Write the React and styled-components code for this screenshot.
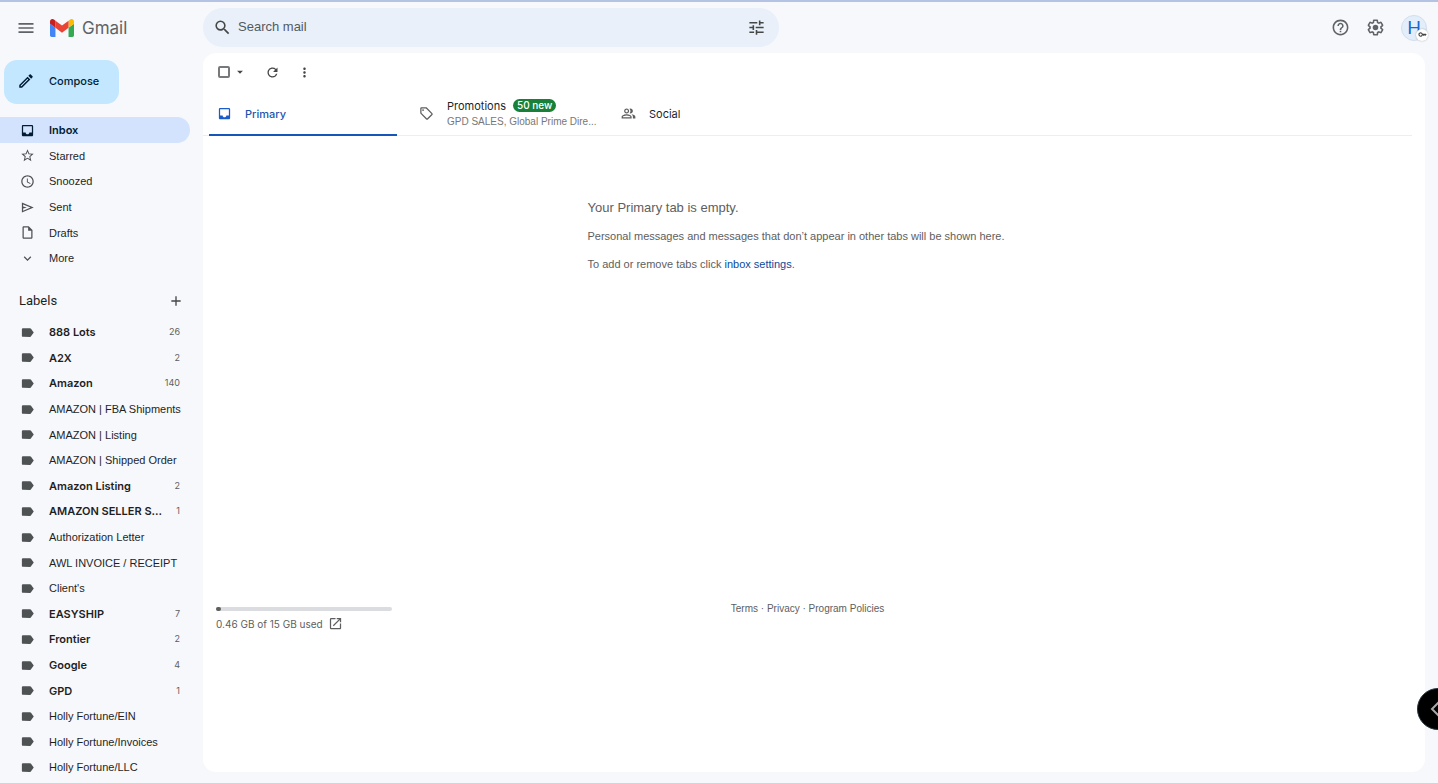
import React from "react";
import styled, { createGlobalStyle } from "styled-components";
import {
  MdAccessTime,
  MdAdd,
  MdArrowDropDown,
  MdExpandMore,
  MdHelpOutline,
  MdInbox,
  MdKey,
  MdLabel,
  MdMenu,
  MdMoreVert,
  MdOutlineEdit,
  MdOutlineInsertDriveFile,
  MdOutlineOpenInNew,
  MdOutlinePeopleAlt,
  MdOutlineSell,
  MdRefresh,
  MdSearch,
  MdStarBorder,
  MdTune
} from "react-icons/md";

const textFont = '"Liberation Sans", Arial, sans-serif';
const wideFont = "Inter, Roboto, sans-serif";

const GlobalStyle = createGlobalStyle`
  * {
    box-sizing: border-box;
  }
  body {
    margin: 0;
    overflow: hidden;
    background: #f6f8fc;
    color: #1f1f1f;
    font-family: ${textFont};
    font-size: 11px;
    line-height: 16px;
  }
  button, input {
    font: inherit;
    color: inherit;
  }
  svg {
    display: block;
    flex: none;
  }
`;

const Page = styled.div`
  display: flex;
  flex-direction: column;
  min-height: 100vh;
  border-top: 2px solid #b4c3e4;
`;

const Header = styled.header`
  display: flex;
  align-items: center;
  height: 51px;
  padding-right: 11px;
`;

const Brand = styled.div`
  display: flex;
  align-items: center;
  flex: none;
  width: 203px;
  padding-left: 17px;
  gap: 15px;
`;

const BrandLink = styled.a`
  display: flex;
  align-items: center;
  gap: 8px;
  color: #5f6368;
  font-family: ${wideFont};
  font-size: 17px;
  line-height: 24px;
  text-decoration: none;
`;

const IconButton = styled.button`
  display: flex;
  align-items: center;
  justify-content: center;
  flex: none;
  width: ${props => props.$size || "18px"};
  height: ${props => props.$size || "18px"};
  padding: 0;
  border: 0;
  background: none;
  color: ${props => props.$color || "#444746"};
  cursor: pointer;
`;

const SearchBar = styled.form`
  display: flex;
  align-items: center;
  flex: 0 1 576px;
  height: 39px;
  padding: 0 14px 0 10px;
  gap: 7px;
  border-radius: 20px;
  background: #e9f0fa;
`;

const SearchInput = styled.input`
  flex: 1;
  min-width: 0;
  padding: 0 0 2px;
  border: 0;
  outline: none;
  background: none;
  font-size: 13px;
  &::placeholder {
    color: #55595d;
    opacity: 1;
  }
`;

const Account = styled.div`
  display: flex;
  align-items: center;
  gap: 17px;
  margin-left: auto;
`;

const Avatar = styled.button`
  position: relative;
  width: 26px;
  height: 26px;
  padding: 0 0 2px;
  border: 1px solid #d3deee;
  border-radius: 50%;
  background: #e3eefb;
  color: #1967d2;
  font-family: Lato, sans-serif;
  font-size: 18px;
  line-height: 22px;
  cursor: pointer;
`;

const AvatarBadge = styled.span`
  position: absolute;
  right: -2px;
  bottom: -1px;
  display: flex;
  align-items: center;
  justify-content: center;
  width: 12px;
  height: 12px;
  border-radius: 50%;
  background: #fff;
  box-shadow: 0 0 2px rgba(0, 0, 0, 0.3);
  color: #444746;
`;

const Body = styled.div`
  display: flex;
  flex: 1;
`;

const Sidebar = styled.aside`
  flex: none;
  width: 203px;
  padding: 7px 13px 0 0;
`;

const Compose = styled.button`
  display: flex;
  align-items: center;
  height: 44px;
  margin: 0 0 13px 4px;
  padding: 0 20px 2px 13px;
  gap: 14px;
  border: 0;
  border-radius: 13px;
  background: #c2e7ff;
  color: #001d35;
  font-family: ${wideFont};
  font-weight: 500;
  cursor: pointer;
`;

/* rows follow a 128px rhythm for every five entries */
const NavList = styled.ul`
  display: grid;
  grid-template-columns: minmax(0, 1fr);
  grid-auto-rows: 26px 25px 26px 26px 25px;
  margin: 0;
  padding: 0;
  list-style: none;
`;

const NavLink = styled.a`
  display: flex;
  align-items: center;
  height: 100%;
  padding: 0 10px 0 20px;
  gap: 14px;
  border-radius: 0 13px 13px 0;
  background: ${props => (props.$active ? "#d3e3fd" : "transparent")};
  color: ${props => (props.$active ? "#001d35" : "#1f1f1f")};
  font-family: ${props => (props.$bold ? wideFont : textFont)};
  font-weight: ${props => (props.$bold ? 600 : 400)};
  text-decoration: none;
  white-space: nowrap;
  > svg {
    color: ${props => (props.$active ? "#001d35" : "#4f5253")};
  }
`;

const Count = styled.span`
  margin-left: auto;
  color: #5e5e5e;
  font-size: 9px;
  font-weight: 400;
`;

const LabelsHeader = styled.div`
  display: flex;
  align-items: center;
  justify-content: space-between;
  height: 36px;
  margin: 12px 0 0;
  padding: 0 5px 0 19px;
`;

const LabelsTitle = styled.h2`
  margin: 0;
  font-family: Roboto, sans-serif;
  font-size: 13px;
  font-weight: 400;
`;

const Panel = styled.main`
  display: flex;
  flex-direction: column;
  flex: 1;
  margin: 0 13px 11px 0;
  padding-right: 13px;
  border-radius: 13px;
  background: #fff;
`;

const Toolbar = styled.div`
  display: flex;
  align-items: center;
  height: 38px;
  padding-left: 15px;
`;

const SelectAll = styled.input`
  appearance: none;
  width: 12px;
  height: 12px;
  margin: 0 1px 0 0;
  border: 2px solid #777a7c;
  border-radius: 2px;
`;

const ToolButton = styled(IconButton)`
  margin-left: ${props => props.$gap || "0"};
`;

const Tabs = styled.div`
  display: flex;
  height: 45px;
  border-bottom: 1px solid #eceff1;
  font-family: ${wideFont};
`;

const Tab = styled.button`
  display: flex;
  align-items: center;
  flex: 0 1 202px;
  min-width: 0;
  height: 45px;
  padding: 0 8px 0 14px;
  gap: 13px;
  border: 0;
  background: ${props =>
    props.$active
      ? "linear-gradient(#1557b8, #1557b8) 6px 100% / calc(100% - 14px) 2px no-repeat"
      : "none"};
  color: ${props => (props.$active ? "#1a55b0" : "#1f1f1f")};
  font-weight: ${props => (props.$active ? 500 : 400)};
  text-align: left;
  white-space: nowrap;
  cursor: pointer;
  > svg {
    color: ${props => (props.$active ? "#1a5cc8" : "#5e5e5e")};
  }
`;

const TabTitle = styled.span`
  display: flex;
  align-items: center;
  gap: 7px;
`;

const TabNote = styled.span`
  display: block;
  color: #777;
  font-family: ${textFont};
  font-size: 10px;
  line-height: 16px;
`;

const NewBadge = styled.span`
  padding: 0 4px;
  border-radius: 7px;
  background: #188038;
  color: #fff;
  font-size: 10px;
  font-weight: 500;
  line-height: 13px;
`;

const Empty = styled.section`
  width: 440px;
  min-height: 467px;
  margin: 0 auto;
  padding-top: 62px;
  color: #5e5e5e;
`;

const EmptyTitle = styled.h1`
  margin: 0 0 10px;
  font-size: 13px;
  font-weight: 400;
  line-height: 20px;
`;

const EmptyText = styled.p`
  margin: 0 0 12px;
  white-space: nowrap;
  a {
    color: #0b4a9e;
    text-decoration: none;
  }
`;

const Footer = styled.footer`
  display: grid;
  grid-template-columns: 1fr 1fr 1fr;
  color: #5e5e5e;
  font-size: 10px;
  line-height: 12px;
`;

const Quota = styled.div`
  padding: 4px 0 0 13px;
`;

const Meter = styled.div`
  width: 176px;
  height: 4px;
  margin-bottom: 5px;
  border-radius: 2px;
  background: #dadce0;
`;

const MeterFill = styled.div`
  height: 4px;
  border-radius: 2px;
  background: #5e5e5e;
`;

const Storage = styled.a`
  display: flex;
  align-items: center;
  gap: 5px;
  color: inherit;
  font-family: ${wideFont};
  text-decoration: none;
`;

const Legal = styled.nav`
  text-align: center;
  a {
    color: inherit;
    text-decoration: none;
  }
`;

const SideHandle = styled.button`
  position: fixed;
  right: -21px;
  bottom: 53px;
  width: 42px;
  height: 42px;
  padding: 0 0 0 9px;
  border: 1px solid #24333d;
  border-radius: 50%;
  background: #000;
  color: #a8a8a8;
  cursor: pointer;
`;

const GmailMark = () => (
  <svg width="24" height="18" viewBox="52 42 88 66" aria-hidden="true">
    <path fill="#4285f4" d="M58 108h14V74L52 59v43c0 3.32 2.69 6 6 6" />
    <path fill="#34a853" d="M120 108h14c3.32 0 6-2.69 6-6V59l-20 15" />
    <path fill="#fbbc04" d="M120 48v26l20-15v-8c0-7.42-8.47-11.65-14.4-7.2" />
    <path fill="#ea4335" d="M72 74V48l24 18 24-18v26L96 92" />
    <path
      fill="#c5221f"
      d="M52 51v8l20 15V48l-5.6-4.2c-5.94-4.45-14.4-.22-14.4 7.2"
    />
  </svg>
);

const SendIcon = ({ size }) => (
  <svg
    width={size}
    height={size}
    viewBox="0 -960 960 960"
    fill="currentColor"
    aria-hidden="true"
  >
    <path d="M120-160v-640l760 320-760 320Zm80-120 474-200-474-200v140l240 60-240 60v140Zm0 0v-400 400Z" />
  </svg>
);

const GearIcon = ({ size }) => (
  <svg
    width={size}
    height={size}
    viewBox="0 0 24 24"
    fill="currentColor"
    aria-hidden="true"
  >
    <path d="M13.85 22.25h-3.7c-.74 0-1.36-.54-1.45-1.27l-.27-1.89c-.27-.14-.53-.29-.79-.46l-1.8.72c-.7.26-1.47-.03-1.81-.65L2.2 15.53c-.35-.66-.2-1.44.36-1.88l1.53-1.19c-.01-.15-.02-.3-.02-.46 0-.15.01-.31.02-.46l-1.52-1.19c-.59-.45-.74-1.26-.37-1.88l1.85-3.19c.34-.62 1.11-.9 1.79-.63l1.81.73c.26-.17.52-.32.78-.46l.27-1.91c.09-.7.71-1.25 1.44-1.25h3.7c.74 0 1.36.54 1.45 1.27l.27 1.89c.27.14.53.29.79.46l1.8-.72c.71-.26 1.48.03 1.82.65l1.84 3.18c.36.66.2 1.44-.36 1.88l-1.52 1.19c.01.15.02.3.02.46s-.01.31-.02.46l1.52 1.19c.56.45.72 1.23.37 1.86l-1.86 3.22c-.34.62-1.11.9-1.8.63l-1.8-.72c-.26.17-.52.32-.78.46l-.27 1.91c-.1.68-.72 1.22-1.46 1.22zm-3.23-2h2.76l.37-2.55.53-.22c.44-.18.88-.44 1.34-.78l.45-.34 2.38.96 1.38-2.4-2.03-1.58.07-.56c.03-.26.06-.51.06-.78s-.03-.53-.06-.78l-.07-.56 2.03-1.58-1.39-2.4-2.39.96-.45-.35c-.42-.32-.87-.58-1.33-.77l-.52-.22-.37-2.55h-2.76l-.37 2.55-.53.21c-.44.19-.88.44-1.34.79l-.45.33-2.38-.95-1.39 2.39 2.03 1.58-.07.56a7 7 0 0 0-.06.79c0 .26.02.53.06.78l.07.56-2.03 1.58 1.38 2.4 2.39-.96.45.35c.43.33.86.58 1.33.77l.53.22.38 2.55z" />
    <circle cx="12" cy="12" r="3.5" />
  </svg>
);

const Chevron = () => (
  <svg width="16" height="16" viewBox="0 0 16 16" aria-hidden="true">
    <path d="M12 1L5 8l7 7" fill="none" stroke="currentColor" strokeWidth="2" />
  </svg>
);

const folders = [
  { name: "Inbox", icon: MdInbox, active: true },
  { name: "Starred", icon: MdStarBorder },
  { name: "Snoozed", icon: MdAccessTime },
  { name: "Sent", icon: SendIcon },
  { name: "Drafts", icon: MdOutlineInsertDriveFile },
  { name: "More", icon: MdExpandMore }
];

const labels = [
  { name: "888 Lots", count: 26 },
  { name: "A2X", count: 2 },
  { name: "Amazon", count: 140 },
  { name: "AMAZON | FBA Shipments" },
  { name: "AMAZON | Listing" },
  { name: "AMAZON | Shipped Order" },
  { name: "Amazon Listing", count: 2 },
  { name: "AMAZON SELLER S...", count: 1 },
  { name: "Authorization Letter" },
  { name: "AWL INVOICE / RECEIPT" },
  { name: "Client's" },
  { name: "EASYSHIP", count: 7 },
  { name: "Frontier", count: 2 },
  { name: "Google", count: 4 },
  { name: "GPD", count: 1 },
  { name: "Holly Fortune/EIN" },
  { name: "Holly Fortune/Invoices" },
  { name: "Holly Fortune/LLC" }
];

const storage = { used: 0.46, total: 15 };

const NavItem = ({ item, icon: Icon, bold }) => (
  <li>
    <NavLink href="#" $active={item.active} $bold={bold}>
      <Icon size={15} />
      {item.name}
      {item.count !== undefined && <Count>{item.count}</Count>}
    </NavLink>
  </li>
);

const App = () => (
  <>
    <GlobalStyle />
    <Page>
      <Header>
        <Brand>
          <IconButton aria-label="Main menu" $color="#5f6368">
            <MdMenu size={20} />
          </IconButton>
          <BrandLink href="#">
            <GmailMark />
            Gmail
          </BrandLink>
        </Brand>
        <SearchBar role="search">
          <IconButton type="button" aria-label="Search">
            <MdSearch size={19} />
          </IconButton>
          <SearchInput
            type="text"
            placeholder="Search mail"
            aria-label="Search mail"
          />
          <IconButton type="button" aria-label="Search options">
            <MdTune size={19} />
          </IconButton>
        </SearchBar>
        <Account>
          <IconButton aria-label="Support" $color="#5f6368">
            <MdHelpOutline size={19} />
          </IconButton>
          <IconButton aria-label="Settings" $color="#5f6368">
            <GearIcon size={19} />
          </IconButton>
          <Avatar aria-label="Account">
            H
            <AvatarBadge>
              <MdKey size={9} />
            </AvatarBadge>
          </Avatar>
        </Account>
      </Header>
      <Body>
        <Sidebar>
          <Compose>
            <MdOutlineEdit size={18} />
            Compose
          </Compose>
          <NavList>
            {folders.map(item => (
              <NavItem
                key={item.name}
                item={item}
                icon={item.icon}
                bold={item.active}
              />
            ))}
          </NavList>
          <LabelsHeader>
            <LabelsTitle>Labels</LabelsTitle>
            <IconButton aria-label="Create new label">
              <MdAdd size={16} />
            </IconButton>
          </LabelsHeader>
          <NavList>
            {labels.map(item => (
              <NavItem
                key={item.name}
                item={item}
                icon={MdLabel}
                bold={item.count !== undefined}
              />
            ))}
          </NavList>
        </Sidebar>
        <Panel>
          <Toolbar>
            <SelectAll type="checkbox" aria-label="Select all" />
            <ToolButton aria-label="Select options">
              <MdArrowDropDown size={14} />
            </ToolButton>
            <ToolButton aria-label="Refresh" $gap="14px">
              <MdRefresh size={15} />
            </ToolButton>
            <ToolButton aria-label="More options" $gap="14px">
              <MdMoreVert size={15} />
            </ToolButton>
          </Toolbar>
          <Tabs role="tablist">
            <Tab role="tab" aria-selected="true" $active>
              <MdInbox size={15} />
              Primary
            </Tab>
            <Tab role="tab" aria-selected="false">
              <MdOutlineSell size={15} />
              <span>
                <TabTitle>
                  Promotions <NewBadge>50 new</NewBadge>
                </TabTitle>
                <TabNote>GPD SALES, Global Prime Dire...</TabNote>
              </span>
            </Tab>
            <Tab role="tab" aria-selected="false">
              <MdOutlinePeopleAlt size={15} />
              Social
            </Tab>
          </Tabs>
          <Empty>
            <EmptyTitle>Your Primary tab is empty.</EmptyTitle>
            <EmptyText>
              Personal messages and messages that don’t appear in other tabs
              will be shown here.
            </EmptyText>
            <EmptyText>
              To add or remove tabs click <a href="#">inbox settings</a>.
            </EmptyText>
          </Empty>
          <Footer>
            <Quota>
              <Meter>
                <MeterFill
                  style={{ width: `${(storage.used / storage.total) * 100}%` }}
                />
              </Meter>
              <Storage href="#">
                {storage.used} GB of {storage.total} GB used
                <MdOutlineOpenInNew size={15} />
              </Storage>
            </Quota>
            <Legal>
              <a href="#">Terms</a> · <a href="#">Privacy</a> ·{" "}
              <a href="#">Program Policies</a>
            </Legal>
          </Footer>
        </Panel>
      </Body>
      <SideHandle aria-label="Open side panel">
        <Chevron />
      </SideHandle>
    </Page>
  </>
);

export default App;
